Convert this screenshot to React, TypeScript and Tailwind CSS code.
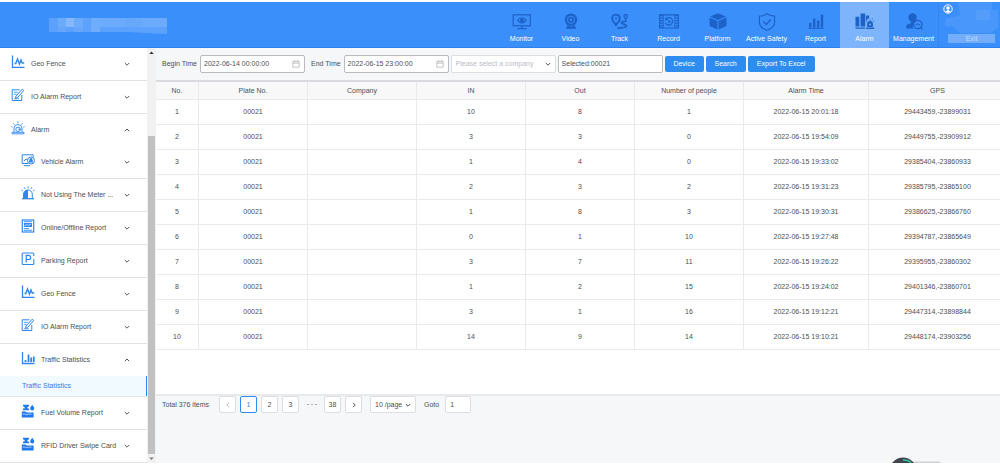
import React, { ReactNode } from "react";

const INK = "#1c62c9";

/* ---------- header icons (20 x 18) ---------- */

function NavSvg({ children }: { children: ReactNode }) {
  return (
    <svg viewBox="0 0 20 18" className="h-[18px] w-5" fill="none" stroke={INK} strokeWidth="1.2" aria-hidden="true">
      {children}
    </svg>
  );
}

const navItems: { label: string; icon: ReactNode }[] = [
  {
    label: "Monitor",
    icon: (
      <NavSvg>
        <rect x="1.2" y="1.8" width="17.2" height="11" />
        <path d="M10 13v2M5.5 15.6h9" />
        <path d="M5.8 7.3c2.4-3.4 6-3.4 8.4 0c-2.4 3.4-6 3.4-8.4 0z" />
        <circle cx="10" cy="7.3" r="1.4" fill={INK} />
      </NavSvg>
    ),
  },
  {
    label: "Video",
    icon: (
      <NavSvg>
        <circle cx="10" cy="6.8" r="6.3" fill={INK} stroke="none" />
        <circle cx="10" cy="6.8" r="3.6" stroke="#3b8ffb" strokeWidth="0.9" />
        <circle cx="10" cy="6.8" r="1.2" fill="#3b8ffb" stroke="none" />
        <path d="M6.5 12.4l-2 3.4h11l-2-3.4c-2 1.4-5 1.4-7 0z" fill={INK} stroke="none" />
      </NavSvg>
    ),
  },
  {
    label: "Track",
    icon: (
      <NavSvg>
        <path d="M6 1.6c-2.4 0-3.9 1.7-3.9 3.8c0 2.4 2.4 4.4 3.9 6.6c1.5-2.2 3.9-4.2 3.9-6.6c0-2.1-1.5-3.8-3.9-3.8z" strokeWidth="1.9" />
        <circle cx="6" cy="5.4" r="1" strokeWidth="0.7" />
        <path d="M15.7 1.5c-1.2 0-1.7.8-1.7 1.6c0 1.2 1.1 1.8 1.7 3.2c.6-1.4 1.7-2 1.7-3.2c0-.8-.5-1.6-1.7-1.6z" strokeWidth="1.3" />
        <path d="M16.5 7.8c-1.2 1-5 .2-5 2c0 1.7 4.8.8 4.8 3c0 2-3.5 2.2-8.8 2.2" strokeWidth="1.9" />
      </NavSvg>
    ),
  },
  {
    label: "Record",
    icon: (
      <NavSvg>
        <path d="M.6 1.8h19v13.2h-19z" />
        <path d="M4.2 2v13M15.9 2v13" strokeWidth="1" />
        <path d="M2.3 2v13M17.9 2v13" strokeWidth="2.6" strokeDasharray="1.2 1.3" />
        <path d="M6.8 6.4a3.7 3.7 0 1 1-.2 3.5M6.6 4.6l.2 2.2l2-.4" strokeWidth="1.2" />
        <path d="M9.3 6.8l2.8 1.7l-2.8 1.7z" fill={INK} stroke="none" />
      </NavSvg>
    ),
  },
  {
    label: "Platform",
    icon: (
      <NavSvg>
        <g fill={INK} stroke="none">
          <path d="M10 .2l8 3.300l-8 3.500l-8-3.500z" />
          <path d="M1.5 4.500l8 3.500v8.600l-8-3.700z" />
          <path d="M18.5 4.500l-8 3.500v8.600l8-3.700z" />
        </g>
      </NavSvg>
    ),
  },
  {
    label: "Active Safety",
    icon: (
      <NavSvg>
        <path d="M10 .8c2.4 1.6 4.8 2.3 7.6 2.4v6c0 4-3.4 6.6-7.6 8.100c-4.200-1.500-7.600-4.100-7.600-8.100v-6c2.800-.1 5.200-.8 7.600-2.400z" />
        <path d="M6.4 8.6l2.8 2.8l4.6-4.8" strokeWidth="1.4" />
      </NavSvg>
    ),
  },
  {
    label: "Report",
    icon: (
      <NavSvg>
        <path d="M2.5 15.4h15" strokeWidth="1" />
        <path d="M4.3 14.5v-4.5M8.200 14.500v-9M12.100 14.500v-7M16 14.500v-13" strokeWidth="2.4" />
      </NavSvg>
    ),
  },
  {
    label: "Alarm",
    icon: (
      <NavSvg>
        <g fill={INK} stroke="none">
          <path d="M.5 3.8h3.8v9.8h-3.8zM5.6.4h4.6v13.2h-4.600zM.5 14.600h9.700v1.200h-9.700z" />
          <path d="M10.9 2.6h3.2v2.6l-2.1 1.4l-1.1 2z" />
          <path d="M12.100 14v-3a2.900 2.900 0 0 1 5.800 0v3zM11.200 14.600h8v1.300h-8z" />
        </g>
        <path d="M15 8v-1.6M11.900 8.800l-1-1M18.100 8.800l1.100-1.100M17 6.600l.6-1.200" strokeWidth=".8" />
        <circle cx="15" cy="11.6" r="1" fill="#7db4fb" stroke="none" />
      </NavSvg>
    ),
  },
  {
    label: "Management",
    icon: (
      <NavSvg>
        <g fill={INK} stroke="none">
          <circle cx="8.6" cy="4.5" r="4.2" />
          <path d="M6.6 7.5h4.2l-.8 3c-1.6 1.6-1.4 3.6-.6 5h-7.200v-2.600c1-1.800 3-2 4.800-2.600z" />
        </g>
        <circle cx="13.8" cy="11.5" r="4.2" strokeWidth="1.2" />
        <path d="M16.8 14.5l1.6 1.7" strokeWidth="1.4" />
        <path d="M11.2 12.7l1.9-2l1.5 1.3l1.8-1" strokeWidth="1" />
      </NavSvg>
    ),
  },
];

/* ---------- sidebar icons (14 x 14) ---------- */

function SideSvg({ children }: { children: ReactNode }) {
  return (
    <svg viewBox="0 0 14 14" className="h-3.5 w-3.5 shrink-0" fill="none" stroke="#2f86f0" strokeWidth="1" aria-hidden="true">
      {children}
    </svg>
  );
}

const fenceIcon = (
  <SideSvg>
    <path d="M1.5 .5v11.800h12" strokeWidth="1.3" />
    <path d="M3.5 8.500h1.300l1.700-4.500l2 5l1.500-4l1.200 3h2" strokeWidth="1.4" />
  </SideSvg>
);
const noteIcon = (
  <SideSvg>
    <path d="M8.500 1.800h-7.300v10.700h9.600v-5.500" strokeWidth="1" />
    <path d="M11.200 1.200l1.500 1.300l-6 7l-2.200.9l.5-2.300z" strokeWidth="1" />
    <path d="M3 4.300h3.800M3 6.300h2.500M3 10.800h5" strokeWidth=".8" />
  </SideSvg>
);
const alarmIcon = (
  <SideSvg>
    <path d="M3 11v-3.500a4 4 0 0 1 8 0v3.500M1 11.300h12v1.500h-12z" strokeWidth=".9" />
    <circle cx="7" cy="8.300" r="2.200" strokeWidth="1" />
    <path d="M7 8.300h4M7 2.300v-2M3.500 3.500l-1.200-1.400M10.500 3.500l1.200-1.400M1.800 6.200l-1.500-.6M12.200 6.200l1.500-.6" strokeWidth=".8" />
  </SideSvg>
);
const vehicleIcon = (
  <SideSvg>
    <path d="M7 10.500h-5.800v-8.700h11v2" />
    <path d="M3 12.700h6M3 8l2-2l1.500 1" />
    <circle cx="10" cy="7.500" r="3.500" />
    <path d="M10 4.800c1.500 1 1.800 2.200 1.800 3.600l.7 1.200h-5l.7-1.200c0-1.400.3-2.600 1.800-3.600z" fill="#2f86f0" stroke="none" />
  </SideSvg>
);
const meterIcon = (
  <SideSvg>
    <path d="M2.700 12v-3.700a4.300 4.300 0 0 1 8.600 0v3.700" />
    <path d="M7 4v8.500h-4.800v-4.200c0-2.500 2-4.300 4.800-4.300z" fill="#2f86f0" stroke="none" />
    <path d="M1 12.700h12" strokeWidth="1.300" />
    <path d="M7 2.500v-2.300M4.200 3l-1.200-2M9.800 3l1.200-2M2 5l-1.600-1.200M12 5l1.600-1.200" strokeWidth=".8" />
  </SideSvg>
);
const onlineIcon = (
  <SideSvg>
    <rect x="1.300" y="1" width="11.400" height="12" strokeWidth="1.200" />
    <rect x="3" y="4" width="8" height="4" fill="#2f86f0" stroke="none" />
    <path d="M3.500 6.800l2-1.200l2 .8l2.500-1.400" stroke="#fff" strokeWidth=".7" />
    <path d="M3 2.700h8M3 9.600h5M3 11.300h8" strokeWidth=".9" />
  </SideSvg>
);
const parkingIcon = (
  <SideSvg>
    <path d="M12.800 4v-2q0-1-1-1h-9.600q-1 0-1 1v9.500q0 1 1 1h9.600q1 0 1-1v-4.500" strokeWidth="1.100" />
    <path d="M5.200 10.500v-7.200h2.300a2 2 0 0 1 0 4.200h-2.300" strokeWidth="1.200" />
  </SideSvg>
);
const statsIcon = (
  <SideSvg>
    <path d="M1.500 1v11.500h12" strokeWidth="1.300" />
    <path d="M4.500 11v-2M7.500 11v-7.500M10.200 11v-4.500M12.800 11v-5.500" strokeWidth="1.800" />
  </SideSvg>
);
const fuelIcon = (
  <SideSvg>
    <g fill="#2179ef" stroke="none">
      <path d="M2 .8h6v1.500l-1.600.7v1.500h1.600v1.700h-6v-1.700h1.600v-1.500l-1.600-.7z" />
      <path d="M11.200 .8c1.200 1.700 2 2.500 2 3.700a2 2 0 0 1-4 0c0-1.200.8-2 2-3.700z" />
      <path d="M.8 7.500h3.500l1.500 1h6.800v4.900h-11.800z" />
    </g>
    <path d="M1.500 10.300q1.500-1 3 0t3 0t3 0" stroke="#fff" strokeWidth=".6" />
  </SideSvg>
);

function Chevron({ up = false, className = "" }: { up?: boolean; className?: string }) {
  return (
    <svg viewBox="0 0 6 6" className={`h-1.5 w-1.5 shrink-0 ${className}`} fill="none" stroke="#555" strokeWidth="1" aria-hidden="true">
      <path d={up ? "M.8 4.200l2.200-2.200l2.200 2.200" : "M.8 2l2.200 2.200l2.200-2.200"} />
    </svg>
  );
}

type MenuRow = { label: string; icon: ReactNode; nested?: boolean; open?: boolean };

const menuTop: MenuRow[] = [
  { label: "Geo Fence", icon: fenceIcon },
  { label: "IO Alarm Report", icon: noteIcon },
  { label: "Alarm", icon: alarmIcon, open: true },
  { label: "Vehicle Alarm", icon: vehicleIcon, nested: true },
  { label: "Not Using The Meter ...", icon: meterIcon, nested: true },
  { label: "Online/Offline Report", icon: onlineIcon, nested: true },
  { label: "Parking Report", icon: parkingIcon, nested: true },
  { label: "Geo Fence", icon: fenceIcon, nested: true },
  { label: "IO Alarm Report", icon: noteIcon, nested: true },
  { label: "Traffic Statistics", icon: statsIcon, nested: true, open: true },
];
const menuBottom: MenuRow[] = [
  { label: "Fuel Volume Report", icon: fuelIcon, nested: true },
  { label: "RFID Driver Swipe Card", icon: fuelIcon, nested: true },
];

function MenuItem({ label, icon, nested, open }: MenuRow) {
  return (
    <li>
      <button
        type="button"
        aria-expanded={!!open}
        className={`flex w-full items-center whitespace-nowrap pr-[17px] text-left ${nested ? "pl-[21px]" : "pl-[11px]"} ${
          open ? "h-8" : "h-[33px] border-b border-[#e2e2e4]"
        }`}
      >
        <span className="pb-1">{icon}</span>
        <span className="flex-1 pl-1.5">{label}</span>
        <Chevron up={open} />
      </button>
    </li>
  );
}

const columns = ["No.", "Plate No.", "Company", "IN", "Out", "Number of people", "Alarm Time", "GPS"];

const rows: [number, number, number, string, string][] = [
  [10, 8, 1, "2022-06-15 20:01:18", "29443459,-23899031"],
  [3, 3, 0, "2022-06-15 19:54:09", "29449755,-23909912"],
  [1, 4, 0, "2022-06-15 19:33:02", "29385404,-23860933"],
  [2, 3, 2, "2022-06-15 19:31:23", "29385795,-23865100"],
  [1, 8, 3, "2022-06-15 19:30:31", "29386625,-23866760"],
  [0, 1, 10, "2022-06-15 19:27:48", "29394787,-23865649"],
  [3, 7, 11, "2022-06-15 19:26:22", "29395955,-23860302"],
  [1, 2, 15, "2022-06-15 19:24:02", "29401346,-23860701"],
  [3, 1, 16, "2022-06-15 19:12:21", "29447314,-23898844"],
  [14, 9, 14, "2022-06-15 19:10:21", "29448174,-23903256"],
];

function DateField({ id, label, value }: { id: string; label: string; value: string }) {
  return (
    <div className="flex items-center gap-[3px]">
      <label htmlFor={id} className="whitespace-nowrap">
        {label}
      </label>
      <div className="flex h-[18px] w-[105px] items-center rounded-xs border border-[#b9bbbf] bg-white pl-[3px] pr-1">
        <input id={id} type="text" defaultValue={value} className="w-0 min-w-0 flex-1 bg-transparent outline-none" />
        <svg viewBox="0 0 8 8" className="h-2 w-2" fill="none" stroke="#b5b8be" strokeWidth=".8" aria-hidden="true">
          <path d="M.8 1.400h6.400v5.800h-6.400zM.8 3.200h6.400M2.500.4v1.800M5.500.4v1.800" />
        </svg>
      </div>
    </div>
  );
}

const blueButton = "h-4 rounded-xs bg-[#2d8cf0] text-center whitespace-nowrap text-white";
const pageButton = "flex h-[17px] w-[17px] items-center justify-center rounded-xs border bg-white";

export default function App() {
  return (
    <div className="flex h-screen flex-col overflow-hidden bg-white py-0.5 font-['Liberation_Sans',Arial,sans-serif] text-[7px] leading-[10px] text-[#4c4f55]">
      <header className="flex h-[46px] shrink-0 items-stretch border-b border-[#2f80ea] bg-[#3b8ffb] text-white">
        <div className="flex flex-1 items-start pl-[49px] pt-4">
          <svg viewBox="0 0 118 16" className="h-4 w-[118px]" fill="#fff" aria-hidden="true">
            <path d="M0 0h118v16l-40-2h-78z" opacity=".17" />
            <path d="M9 0h8v9h-8zM25 0h9v9h-9zM51 0h8v9h-8zM59 0h8v9h-8zM67 0h9v9h-9zM93 0h8v9h-8zM101 0h17v9h-17z" opacity=".1" />
            <path d="M17 0h8v9h-8z" opacity=".25" />
            <path d="M42 0h9v14h-9z" opacity=".12" />
            <path d="M76 0h17v9h-17z" opacity=".08" />
            <path d="M9 9h8v5h-8zM25 9h9v5h-9z" opacity=".06" />
          </svg>
        </div>
        <nav className="flex">
          {navItems.map(({ label, icon }) => (
            <a
              key={label}
              href="#"
              className={`flex w-[49px] flex-col items-center pt-[11px] whitespace-nowrap ${label === "Alarm" ? "-mb-px bg-[#7db4fb]" : ""}`}
            >
              {icon}
              <span className="pt-[3px]">{label}</span>
            </a>
          ))}
        </nav>
        <div className="flex w-[62px] flex-col justify-between border-l border-[#3585ef] pb-1 pl-[3px]">
          <svg viewBox="0 0 58 32" className="h-8 w-[58px]" aria-hidden="true">
            <path d="M16 0h34v8h6v18l-8 5h-30l-6-6l-9-1l1-8l14-2z" fill="#fff" opacity=".08" />
            <path d="M34 8h14v10h-14z" fill="#fff" opacity=".06" />
            <circle cx="6" cy="7" r="4.2" fill="none" stroke="#fff" strokeWidth="1" />
            <circle cx="6" cy="6" r="1.8" fill="#fff" />
            <path d="M3.3 9.7q2.700-3.200 5.400 0q-2.700 2-5.400 0z" fill="#fff" />
          </svg>
          <button type="button" className="ml-1.5 h-[9px] w-[47px] bg-[#73adfc] leading-[9px] text-[#c4ddfe]">
            Exit
          </button>
        </div>
      </header>

      <div className="flex min-h-0 flex-1">
        <aside className="flex w-[156px] shrink-0 overflow-hidden">
          <ul className="w-[147px]">
            {menuTop.map((item, i) => (
              <MenuItem key={i} {...item} />
            ))}
            <li className="border-b border-[#e2e2e4]">
              <a href="#" className="flex h-5 items-center border-r border-[#2d8cf0] bg-[#f0faff] pl-[22px] text-[#2d7fdc]">
                Traffic Statistics
              </a>
            </li>
            {menuBottom.map((item, i) => (
              <MenuItem key={i} {...item} />
            ))}
          </ul>
          <div className="flex w-[9px] flex-col items-center bg-[#f1f1f1]" aria-hidden="true">
            <svg viewBox="0 0 9 9" className="h-[9px] w-[9px] shrink-0">
              <path d="M4.500 3.500l2.200 2.500h-4.400z" fill="#333" />
            </svg>
            <div className="grow-[20]" />
            <div className="w-[7px] grow-[80] bg-[#c1c1c1]" />
            <svg viewBox="0 0 9 9" className="h-[9px] w-[9px] shrink-0">
              <path d="M4.500 6l2.200-2.500h-4.400z" fill="#777" />
            </svg>
          </div>
        </aside>

        <main className="relative flex min-w-0 flex-1 flex-col overflow-hidden bg-[#f5f7f9]">
          <form
            className="flex h-[34px] shrink-0 items-center gap-0.5 border-b-2 border-[#d9dadd] pl-1.5"
            onSubmit={(e) => e.preventDefault()}
          >
            <div className="flex gap-1.5">
              <DateField id="begin" label="Begin Time" value="2022-06-14 00:00:00" />
              <DateField id="end" label="End Time" value="2022-06-15 23:00:00" />
            </div>
            <div className="relative flex items-center">
              <select
                aria-label="Company"
                defaultValue=""
                className="h-[18px] w-[105px] appearance-none rounded-xs border border-[#dcdee2] bg-white pl-1 text-[#b9bdc6] outline-none"
              >
                <option value="">Please select a company</option>
              </select>
              <Chevron className="pointer-events-none absolute right-[5px]" />
            </div>
            <input
              aria-label="Selected device"
              type="text"
              defaultValue="Selected:00021"
              className="h-[18px] w-[105px] rounded-xs border border-[#b9bbbf] bg-white pb-px pl-[3px] outline-none"
            />
            <button type="button" className={`${blueButton} w-[39px]`}>
              Device
            </button>
            <button type="button" className={`${blueButton} w-10`}>
              Search
            </button>
            <button type="button" className={`${blueButton} w-[67px]`}>
              Export To Excel
            </button>
          </form>

          <div className="shrink-0 border-b-2 border-[#e8eaec] bg-white pb-11">
            <table className="w-full table-fixed border-separate border-spacing-0 text-center">
              <colgroup>
                <col className="w-[43px]" />
                <col className="w-[109px]" />
                <col className="w-[109px]" />
                <col className="w-[109px]" />
                <col className="w-[109px]" />
                <col className="w-[109px]" />
                <col className="w-[125px]" />
                <col />
              </colgroup>
              <thead>
                <tr>
                  {columns.map((c) => (
                    <th
                      key={c}
                      scope="col"
                      className="h-[18px] border-r border-b border-[#e8eaec] bg-[#f8f8f9] p-0 font-normal last:border-r-0 last:pl-1.5"
                    >
                      {c}
                    </th>
                  ))}
                </tr>
              </thead>
              <tbody>
                {rows.map(([inn, out, people, time, gps], i) => (
                  <tr key={time}>
                    {[i + 1, "00021", "", inn, out, people, time, gps].map((v, j) => (
                      <td key={j} className="h-[25px] border-r border-b border-[#e8eaec] p-0 last:border-r-0 last:pl-1.5">
                        {v}
                      </td>
                    ))}
                  </tr>
                ))}
              </tbody>
            </table>
          </div>

          <div className="flex items-center gap-1 pl-1.5">
            <span className="w-[53px] whitespace-nowrap">Total 376 items</span>
            <button type="button" aria-label="Previous page" className={`${pageButton} border-[#dcdee2]`}>
              <Chevron className="rotate-90 opacity-40" />
            </button>
            <button type="button" className={`${pageButton} border-[#2d8cf0] text-[#2d8cf0]`}>
              1
            </button>
            <button type="button" className={`${pageButton} border-[#dcdee2]`}>
              2
            </button>
            <button type="button" className={`${pageButton} border-[#dcdee2]`}>
              3
            </button>
            <span className="flex w-[17px] justify-center gap-0.5">
              <i className="h-px w-0.5 bg-[#a5a9b0]" />
              <i className="h-px w-0.5 bg-[#a5a9b0]" />
              <i className="h-px w-0.5 bg-[#a5a9b0]" />
            </span>
            <button type="button" className={`${pageButton} border-[#dcdee2]`}>
              38
            </button>
            <button type="button" aria-label="Next page" className={`${pageButton} border-[#dcdee2]`}>
              <Chevron className="-rotate-90" />
            </button>
            <div className="relative ml-1 flex items-center">
              <select
                aria-label="Page size"
                className="h-[17px] w-[46px] appearance-none rounded-xs border border-[#dcdee2] bg-white pl-1 outline-none"
              >
                <option>10 /page</option>
              </select>
              <Chevron className="pointer-events-none absolute right-[5px]" />
            </div>
            <label htmlFor="goto" className="pl-1">
              Goto
            </label>
            <input
              id="goto"
              type="text"
              defaultValue="1"
              className="ml-0.5 h-[17px] w-[26px] rounded-xs border border-[#dcdee2] bg-white pl-1 outline-none"
            />
          </div>

          <svg viewBox="0 0 60 6" className="absolute right-[54px] bottom-0 h-1.5 w-[60px]" aria-hidden="true">
            <path d="M26 4.500h28v1.500h-28z" fill="#cfd1d4" />
            <circle cx="17" cy="14" r="13.500" fill="#43434f" />
            <path d="M17 3q6 0 8 3" stroke="#2fc9a8" strokeWidth="1.300" fill="none" />
          </svg>
        </main>
      </div>
    </div>
  );
}
